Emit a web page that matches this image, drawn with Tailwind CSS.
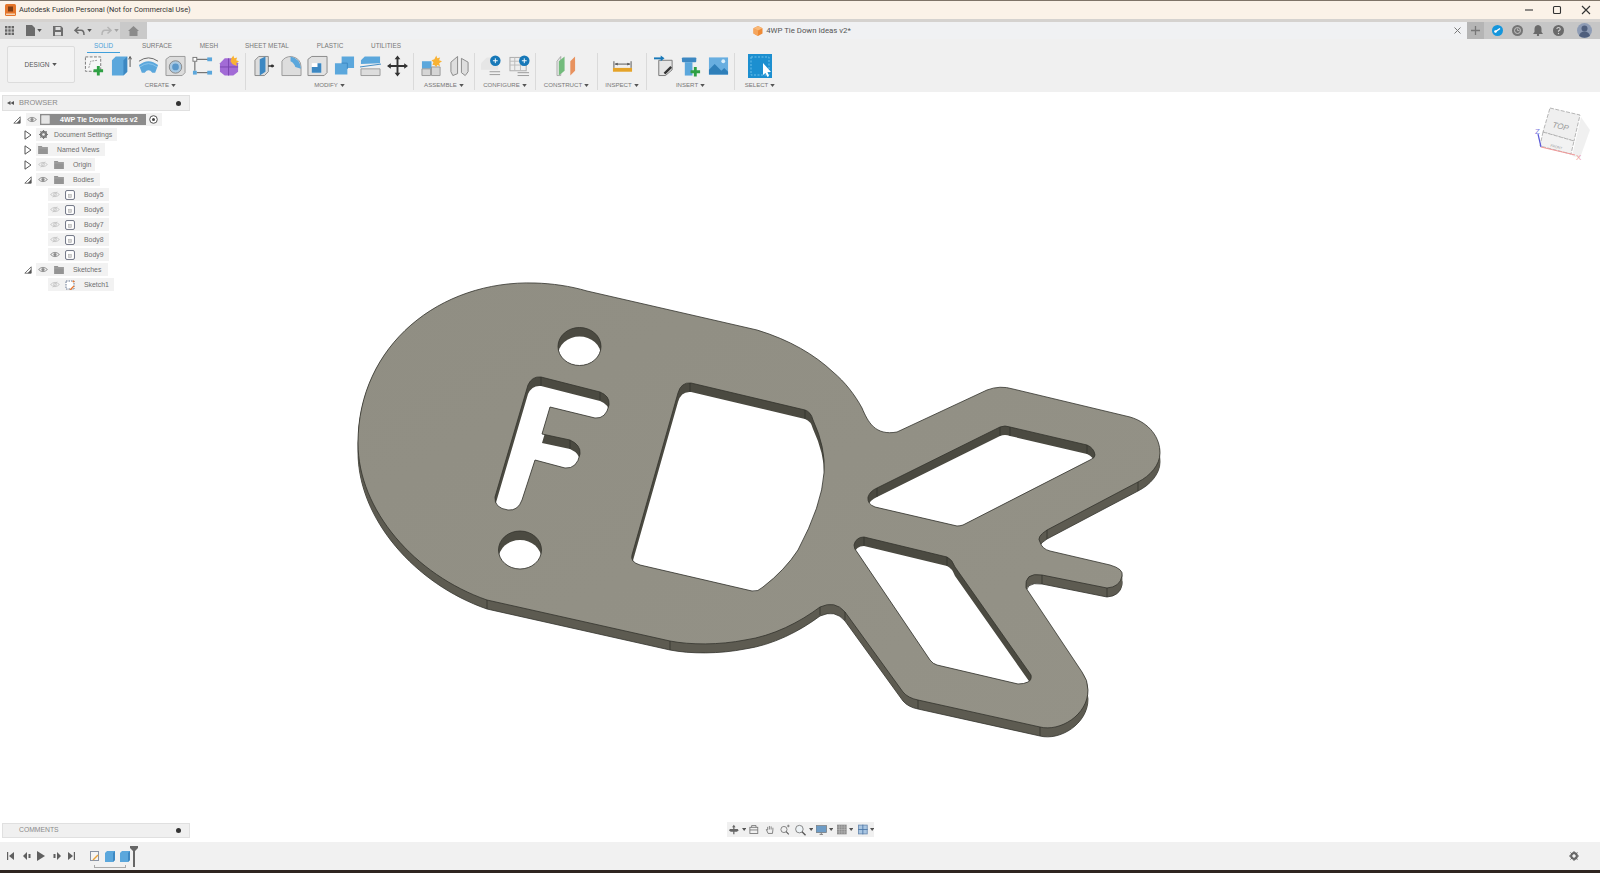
<!DOCTYPE html>
<html lang="en">
<head>
    <meta charset="UTF-8">
    <title>Autodesk Fusion Personal</title>
    <script src="https://cdn.jsdelivr.net/npm/@tailwindcss/browser@4"></script>
</head>
<body class="bg-white">
<!-- shared icon symbols -->
<svg class="hidden" width="0" height="0">
    <symbol id="caret" viewBox="0 0 6 4"><path d="M0 0H6L3 4Z" fill="#555"/></symbol>
    <symbol id="eye" viewBox="0 0 12 8"><path d="M.7 4Q6-1.2 11.3 4 6 9.2.7 4Z" fill="none" stroke="#8a8a8a" stroke-width="1.1"/><circle cx="6" cy="4" r="1.9" fill="#8a8a8a"/></symbol>
    <symbol id="eyeoff" viewBox="0 0 12 8"><path d="M.7 4Q6-1.2 11.3 4 6 9.2.7 4Z" fill="none" stroke="#c4c4c4" stroke-width="1"/><circle cx="6" cy="4" r="1.8" fill="none" stroke="#c4c4c4"/><path d="M8.5.6 3.5 7.4" stroke="#c4c4c4"/></symbol>
    <symbol id="folder" viewBox="0 0 11 9"><path d="M0 0H4L5 1.2H11V9H0Z" fill="#949494"/><path d="M0 2.2H11" stroke="#bdbdbd" stroke-width=".5"/></symbol>
    <symbol id="body" viewBox="0 0 11 11"><rect x=".6" y=".6" width="9.8" height="9.8" rx="1.6" fill="#fff" stroke="#63697a"/><rect x="3.6" y="4.6" width="3.6" height="3.8" fill="#d5d5d5" stroke="#a8a8a8" stroke-width=".5"/></symbol>
    <symbol id="open" viewBox="0 0 8 10"><path d="M1 .8 7 5 1 9.2Z" fill="#fff" stroke="#555" stroke-width="1"/></symbol>
    <symbol id="down" viewBox="0 0 10 10"><path d="M9 1V9H1Z" fill="#fff" stroke="#555" stroke-width="1"/><path d="M9 4V9H4.5Z" fill="#555"/></symbol>
</svg>

<div class="flex h-[873px] w-[1600px] flex-col overflow-hidden bg-white font-['Liberation_Sans',Arial,sans-serif] text-[#6b6b6b]">

    <!-- title bar -->
    <div class="flex h-[19px] shrink-0 items-center border-t border-[#7f7468] bg-[#fbf2e8] pl-[5px]">
        <svg class="h-[12px] w-[11px]" viewBox="0 0 11 12"><rect width="11" height="12" rx="1.5" fill="#e4752a"/><path d="M3 9V2.5H8V7.5H3" fill="#7c3d14"/><rect x="1" y="9.5" width="9" height="1.5" fill="#f8d3b0"/></svg>
        <span class="ml-[3px] font-['Roboto',sans-serif] text-[7.4px] text-[#333]">Autodesk Fusion Personal (Not for Commercial Use)</span>
        <div class="ml-auto flex items-center">
            <svg class="h-[10px] w-[10px]" viewBox="0 0 10 10"><path d="M1 5H9" stroke="#333" stroke-width="1.1"/></svg>
            <svg class="ml-[18px] h-[10px] w-[10px]" viewBox="0 0 10 10"><rect x="1.5" y="1.5" width="7" height="7" rx="1" fill="none" stroke="#333" stroke-width="1.1"/></svg>
            <svg class="ml-[19px] mr-[9px] h-[10px] w-[10px]" viewBox="0 0 10 10"><path d="M1 1 9 9M9 1 1 9" stroke="#333" stroke-width="1.1"/></svg>
        </div>
    </div>
    <div class="h-[3px] shrink-0 bg-[#d5d2cf]"></div>

    <!-- quick access / document tab row -->
    <div class="flex h-[17px] shrink-0 items-stretch bg-[#d9d9d9]">
        <div class="flex w-[120px] shrink-0 items-center">
            <svg class="ml-[5px] h-[9px] w-[9px]" viewBox="0 0 9 9" fill="#666"><rect width="2.4" height="2.4"/><rect x="3.3" width="2.4" height="2.4"/><rect x="6.6" width="2.4" height="2.4"/><rect y="3.3" width="2.4" height="2.4"/><rect x="3.3" y="3.3" width="2.4" height="2.4"/><rect x="6.6" y="3.3" width="2.4" height="2.4"/><rect y="6.6" width="2.4" height="2.4"/><rect x="3.3" y="6.6" width="2.4" height="2.4"/><rect x="6.6" y="6.6" width="2.4" height="2.4"/></svg>
            <svg class="ml-[12px] h-[11px] w-[9px]" viewBox="0 0 9 11"><path d="M0 0H6L9 3V11H0Z" fill="#6b6b6b"/></svg>
            <svg class="ml-[2px] h-[3px] w-[5px]"><use href="#caret"/></svg>
            <svg class="ml-[11px] h-[10px] w-[10px]" viewBox="0 0 10 10"><path d="M0 0H8L10 2V10H0Z" fill="#6e6e6e"/><rect x="2.5" y="1" width="5" height="3" fill="#ddd"/><rect x="2" y="6" width="6" height="3.5" fill="#ddd"/></svg>
            <svg class="ml-[11px] h-[10px] w-[11px]" viewBox="0 0 11 10"><path d="M4.5 1 1 4.3 4.5 7.5M1.5 4.3H7Q10 4.3 10 9" fill="none" stroke="#6b6b6b" stroke-width="1.5"/></svg>
            <svg class="ml-[2px] h-[3px] w-[5px]"><use href="#caret"/></svg>
            <svg class="ml-[9px] h-[10px] w-[11px]" viewBox="0 0 11 10"><path d="M6.5 1 10 4.3 6.5 7.5M9.5 4.3H4Q1 4.3 1 9" fill="none" stroke="#b5b5b5" stroke-width="1.5"/></svg>
            <svg class="ml-[2px] h-[3px] w-[5px] opacity-40"><use href="#caret"/></svg>
        </div>
        <div class="flex w-[27px] shrink-0 items-center justify-center bg-[#c9c9c9]">
            <svg class="h-[10px] w-[11px]" viewBox="0 0 11 10"><path d="M5.5 0 11 5H9.5V10H1.5V5H0Z" fill="#8a8a8a"/></svg>
        </div>
        <div class="flex flex-1 items-center justify-center bg-[#f0f1f3] pl-[10px]">
            <svg class="h-[10px] w-[10px]" viewBox="0 0 10 10"><path d="M5 0 9.5 2.3V7.5L5 10 .5 7.5V2.3Z" fill="#ee8a35"/><path d="M5 4.6V10L.5 7.5V2.3Z" fill="#f5a55c"/><path d="M5 0 9.5 2.3 5 4.6 .5 2.3Z" fill="#f8b878"/></svg>
            <span class="ml-[3px] font-['Roboto',sans-serif] text-[7.8px] text-[#555]">4WP Tie Down Ideas v2*</span>
        </div>
        <div class="flex w-[20px] shrink-0 items-center justify-center bg-[#f0f1f3]">
            <svg class="h-[7px] w-[7px]" viewBox="0 0 7 7"><path d="M.5.5 6.5 6.5M6.5.5.5 6.5" stroke="#777"/></svg>
        </div>
        <div class="flex w-[17px] shrink-0 items-center justify-center bg-[#b5b5b5]">
            <svg class="h-[9px] w-[9px]" viewBox="0 0 9 9"><path d="M4.5 0V9M0 4.5H9" stroke="#777" stroke-width="1.3"/></svg>
        </div>
        <div class="flex w-[116px] shrink-0 items-center bg-[#c6c6c6] pl-[8px]">
            <svg class="h-[11px] w-[11px]" viewBox="0 0 11 11"><circle cx="5.5" cy="5.5" r="5.5" fill="#1596dc"/><path d="M3 7 8 3.5" stroke="#fff" stroke-width="1.5"/><circle cx="3.5" cy="6.5" r="1.3" fill="#fff"/></svg>
            <svg class="ml-[9px] h-[11px] w-[11px]" viewBox="0 0 11 11"><circle cx="5.5" cy="5.5" r="5.5" fill="#747474"/><circle cx="5.5" cy="5.5" r="3" fill="none" stroke="#c6c6c6"/><path d="M5.5 3.5V5.5H7.5" stroke="#c6c6c6" fill="none" stroke-width=".8"/></svg>
            <svg class="ml-[10px] h-[11px] w-[10px]" viewBox="0 0 10 11"><path d="M5 0Q8.5.5 8.5 4V7L10 9H0L1.5 7V4Q1.5.5 5 0Z" fill="#6a6a6a"/><circle cx="5" cy="10" r="1.2" fill="#6a6a6a"/></svg>
            <svg class="ml-[10px] h-[11px] w-[11px]" viewBox="0 0 11 11"><circle cx="5.5" cy="5.5" r="5.5" fill="#6a6a6a"/><path d="M3.8 4Q4 2.5 5.5 2.5T7.3 4Q7.3 5 5.5 6V6.8" fill="none" stroke="#d5d5d5" stroke-width="1.1"/><circle cx="5.5" cy="8.5" r=".7" fill="#d5d5d5"/></svg>
            <svg class="ml-[13px] h-[15px] w-[15px]" viewBox="0 0 15 15"><circle cx="7.5" cy="7.5" r="7.5" fill="#8e9cb5"/><circle cx="7.5" cy="5.5" r="3" fill="#4f5f7d"/><path d="M2 13Q3 8.5 7.5 8.5T13 13Q7.5 16.5 2 13Z" fill="#4f5f7d"/></svg>
        </div>
    </div>

    <!-- ribbon -->
    <div class="flex h-[53px] shrink-0 bg-[#f0f0f0]">
        <div class="w-[84px] shrink-0 pl-[7px] pt-[7px]">
            <div class="flex h-[37px] w-[68px] items-center justify-center gap-[3px] rounded-[2px] border border-[#dcdcdc] bg-[#f3f3f3] text-[6.5px] text-[#555]">
                DESIGN <svg class="h-[3px] w-[5px]"><use href="#caret"/></svg>
            </div>
        </div>
        <div class="flex flex-col">
            <div class="flex h-[14px] items-center pl-[3px] text-center text-[6.4px] text-[#777]">
                <div class="flex h-[14px] w-[33px] items-center justify-center border-b-[1.5px] border-[#3f9fdb] text-[#4a9fd8]">SOLID</div>
                <div class="w-[74px]">SURFACE</div>
                <div class="w-[30px]">MESH</div>
                <div class="w-[86px]">SHEET METAL</div>
                <div class="w-[40px]">PLASTIC</div>
                <div class="w-[72px]">UTILITIES</div>
            </div>
            <div class="flex text-[6.1px] text-[#777]">

                <!-- create -->
                <div class="flex h-[37px] w-[162px] flex-col border-r border-[#dadada] pt-[2px]">
                    <div class="flex h-[22px] gap-[6px]">
                        <svg class="h-[22px] w-[21px]" viewBox="0 0 22 22"><rect x="1.5" y="1.5" width="16" height="15" fill="#f7f7f7" stroke="#777" stroke-dasharray="3 1.5"/><path d="M5 13 7 6 14 5" fill="none" stroke="#999" stroke-dasharray="2 1"/><path d="M15 11V21M10 16H20" stroke="#2ea043" stroke-width="3"/></svg>
                        <svg class="h-[22px] w-[21px]" viewBox="0 0 22 22"><path d="M1 5 5 1H17V17L13 21H1Z" fill="#5ba7dc"/><path d="M13 5V21L17 17V1Z" fill="#3d88c2"/><path d="M20 12V2M18.5 4 20 1 21.5 4" stroke="#555" fill="none"/></svg>
                        <svg class="h-[22px] w-[21px]" viewBox="0 0 22 22"><path d="M1 10Q11 2 21 10L18 18H15Q11 13 7 18H4Z" fill="#5ba7dc"/><path d="M1 6Q11-1 21 6" fill="none" stroke="#666"/><path d="M2 12Q11 5 20 12" fill="none" stroke="#8cc4ea"/></svg>
                        <svg class="h-[22px] w-[21px]" viewBox="0 0 22 22"><path d="M1 4 5 1H21V18L18 21H1Z" fill="#dcdcdc" stroke="#999"/><circle cx="11" cy="12" r="6.5" fill="#a9c9e2" stroke="#888"/><circle cx="11" cy="12" r="3.5" fill="#5a97c9"/></svg>
                        <svg class="h-[22px] w-[21px]" viewBox="0 0 22 22"><path d="M5 4H17M3 6V16M5 18H17" stroke="#555" fill="none"/><rect x="1" y="2" width="4" height="4" fill="#fff" stroke="#777"/><rect x="16" y="2" width="5" height="4" fill="#5ba7dc"/><rect x="1" y="16" width="4" height="4" fill="#5ba7dc"/><rect x="16" y="16" width="5" height="4" fill="#5ba7dc"/></svg>
                        <svg class="h-[22px] w-[21px]" viewBox="0 0 22 22"><path d="M6 3H15L20 8V17L15 21H6L1 17V8Z" fill="#a26bd6"/><path d="M10 3V21M1 12H20" stroke="#7b45b0"/><path d="M15 0 16 3 19 2 18 5 21 6 18 8 19 11 16 10 14 9 12 6 13 3Z" fill="#f9b233"/></svg>
                    </div>
                    <div class="mt-[3px] flex h-[10px] items-center justify-center gap-[2px] pr-[8px]">CREATE <svg class="h-[3px] w-[5px]"><use href="#caret"/></svg></div>
                </div>

                <!-- modify -->
                <div class="flex h-[37px] w-[168px] flex-col border-r border-[#dadada] pl-[8px] pt-[2px]">
                    <div class="flex h-[22px] gap-[5.5px]">
                        <svg class="h-[22px] w-[21px]" viewBox="0 0 22 22"><path d="M1 5 5 1H15V17L11 21H1Z" fill="#ddd" stroke="#888"/><path d="M6 4 12 1V17L6 21Z" fill="#3d88c2"/><path d="M15 11H21" stroke="#333" stroke-width="1.5"/><circle cx="19" cy="11" r="1.5" fill="#333"/></svg>
                        <svg class="h-[22px] w-[21px]" viewBox="0 0 22 22"><path d="M1 6Q4 1 11 1 21 3 21 12V21H1Z" fill="#ddd" stroke="#999"/><path d="M10 1Q20 3 21 14L15 12Q14 8 10 6Z" fill="#5ba7dc"/></svg>
                        <svg class="h-[22px] w-[21px]" viewBox="0 0 22 22"><path d="M1 4 5 1H21V18L18 21H1Z" fill="#e2e2e2" stroke="#888"/><path d="M5 8H15V18H5Z" fill="#fff"/><path d="M5 12H11V8H15V18H5Z" fill="#3d88c2"/></svg>
                        <svg class="h-[22px] w-[21px]" viewBox="0 0 22 22"><path d="M8 1H21V13H14V20H1V8H8Z" fill="#5ba7dc"/><path d="M8 8H14V14" fill="none" stroke="#3d88c2"/></svg>
                        <svg class="h-[22px] w-[21px]" viewBox="0 0 22 22"><path d="M1 5 5 1H21V8L1 9Z" fill="#5ba7dc"/><path d="M1 14H21V21H1Z" fill="#ddd" stroke="#999"/><path d="M0 12 22 9" stroke="#3d88c2"/></svg>
                        <svg class="h-[22px] w-[21px]" viewBox="0 0 22 22"><path d="M11 2V20M2 11H20" stroke="#333" stroke-width="2"/><path d="M11 0 14 4H8ZM11 22 8 18H14ZM0 11 4 8V14ZM22 11 18 14V8Z" fill="#333"/></svg>
                    </div>
                    <div class="mt-[3px] flex h-[10px] items-center justify-center gap-[2px] pr-[8px]">MODIFY <svg class="h-[3px] w-[5px]"><use href="#caret"/></svg></div>
                </div>

                <!-- assemble -->
                <div class="flex h-[37px] w-[61px] flex-col border-r border-[#dadada] pl-[7px] pt-[2px]">
                    <div class="flex h-[22px] gap-[7px]">
                        <svg class="h-[22px] w-[21px]" viewBox="0 0 22 22"><path d="M1 6H11V14H1Z" fill="#5ba7dc"/><path d="M1 14H10V21H1ZM11 12H20V21H11Z" fill="#d5d5d5" stroke="#999"/><path d="M16 0 17 3 20 2 19 5 22 6 19 8 20 11 17 10 16 12 14 10 12 10 13 7 11 5 14 4Z" fill="#f9b233"/></svg>
                        <svg class="h-[22px] w-[21px]" viewBox="0 0 22 22"><path d="M2 7 9 1V19L4 21 2 17ZM20 7 13 3V18L17 21 20 17Z" fill="#dedede" stroke="#888"/></svg>
                    </div>
                    <div class="mt-[3px] flex h-[10px] items-center justify-center gap-[2px] pr-[7px]">ASSEMBLE <svg class="h-[3px] w-[5px]"><use href="#caret"/></svg></div>
                </div>

                <!-- configure -->
                <div class="flex h-[37px] w-[61px] flex-col border-r border-[#dadada] pl-[6px] pt-[2px]">
                    <div class="flex h-[22px] gap-[7px]">
                        <svg class="h-[22px] w-[21px]" viewBox="0 0 22 22"><path d="M0 8 6 2H18V15H0Z" fill="#e6e6e6"/><path d="M9 17H20M9 20H20" stroke="#999"/><circle cx="15" cy="5.5" r="5.5" fill="#1778b8"/><path d="M12.5 5.5H17.5M15 3V8" stroke="#fff"/></svg>
                        <svg class="h-[22px] w-[21px]" viewBox="0 0 22 22"><rect x="1" y="2" width="17" height="14" fill="#eee" stroke="#aaa"/><path d="M1 6H18M1 10H18M6 2V16M12 2V16" stroke="#bbb"/><path d="M9 18H21M9 21H21" stroke="#999"/><circle cx="16" cy="5.5" r="5.5" fill="#1778b8"/><path d="M13.5 5.5H18.5M16 3V8" stroke="#fff"/></svg>
                    </div>
                    <div class="mt-[3px] flex h-[10px] items-center justify-center gap-[2px] pr-[6px]">CONFIGURE <svg class="h-[3px] w-[5px]"><use href="#caret"/></svg></div>
                </div>

                <!-- construct -->
                <div class="flex h-[37px] w-[62px] flex-col border-r border-[#dadada] pt-[2px]">
                    <div class="flex h-[22px] justify-center">
                        <svg class="h-[22px] w-[21px]" viewBox="0 0 22 22"><path d="M1 6 5 1V21L1 21Z" fill="#e5e5e5" stroke="#888" stroke-width=".6"/><path d="M3 6 9 1V16L3 21Z" fill="#73bb7c"/><path d="M15 6 20 1V16L15 21Z" fill="#e8925e"/></svg>
                    </div>
                    <div class="mt-[3px] flex h-[10px] items-center justify-center gap-[2px]">CONSTRUCT <svg class="h-[3px] w-[5px]"><use href="#caret"/></svg></div>
                </div>

                <!-- inspect -->
                <div class="flex h-[37px] w-[49px] flex-col border-r border-[#dadada] pt-[2px]">
                    <div class="flex h-[22px] justify-center">
                        <svg class="h-[22px] w-[21px]" viewBox="0 0 22 22"><path d="M2 6V13M20 6V13M3 9H19" stroke="#555" fill="none"/><path d="M3 9 6 7.5V10.5ZM19 9 16 7.5V10.5Z" fill="#555"/><rect x="1" y="13" width="20" height="4" fill="#e5a329"/></svg>
                    </div>
                    <div class="mt-[3px] flex h-[10px] items-center justify-center gap-[2px]">INSPECT <svg class="h-[3px] w-[5px]"><use href="#caret"/></svg></div>
                </div>

                <!-- insert -->
                <div class="flex h-[37px] w-[88px] flex-col border-r border-[#dadada] pl-[7px] pt-[2px]">
                    <div class="flex h-[22px] gap-[6px]">
                        <svg class="h-[22px] w-[21px]" viewBox="0 0 22 22"><path d="M5 5H19V15L12 21H5Z" fill="#e5e5e5" stroke="#777"/><path d="M0 3H8" stroke="#1778b8" stroke-width="2"/><path d="M7 0 11 3 7 6Z" fill="#1778b8"/><path d="M11 19 18 12" stroke="#333" stroke-width="2.5"/></svg>
                        <svg class="h-[22px] w-[21px]" viewBox="0 0 22 22"><rect x="1" y="2" width="15" height="5" rx="1" fill="#3d88c2"/><rect x="4" y="7" width="8" height="14" fill="#5ba7dc"/><path d="M15 12V22M10 17H20" stroke="#2ea043" stroke-width="3"/></svg>
                        <svg class="h-[22px] w-[21px]" viewBox="0 0 22 22"><rect x="1" y="2" width="20" height="18" fill="#68aee0"/><path d="M1 20V15L7 9 14 16 17 13 21 17V20Z" fill="#2f7fb9"/><circle cx="16" cy="6" r="2" fill="#d9eefb"/></svg>
                    </div>
                    <div class="mt-[3px] flex h-[10px] items-center justify-center gap-[2px] pr-[7px]">INSERT <svg class="h-[3px] w-[5px]"><use href="#caret"/></svg></div>
                </div>

                <!-- select -->
                <div class="flex h-[37px] w-[50px] flex-col pt-[1px]">
                    <div class="flex h-[23px] justify-center">
                        <svg class="h-[24px] w-[24px]" viewBox="0 0 24 24"><rect width="24" height="24" fill="#1c8fd0"/><rect x="3" y="3" width="18" height="18" fill="none" stroke="#6cc0ea" stroke-dasharray="2 1.5"/><path d="M15 9V21L17.5 19 19.5 23 21 22 19.5 18H23Z" fill="#fff"/></svg>
                    </div>
                    <div class="mt-[3px] flex h-[10px] items-center justify-center gap-[2px]">SELECT <svg class="h-[3px] w-[5px]"><use href="#caret"/></svg></div>
                </div>
            </div>
        </div>
    </div>

    <!-- model canvas -->
    <div class="relative flex-1 bg-white">
        <svg class="absolute left-0 top-0" width="1600" height="778" viewBox="0 92 1600 778">
            <defs>
                <linearGradient id="face" x1="0" y1="0" x2="1" y2="1"><stop offset="0" stop-color="#908e83"/><stop offset="1" stop-color="#949287"/></linearGradient>
                <path id="outer" d="M358 443C358 345 440 280 535 283 552 283.5 570 286 587 291L757 330C790 340 815 355 833 372 845 382 855 395 862 408 868 422 875 436 897 432L987 390Q1000 385 1013 389L1130 417C1150 423 1160 438 1160 453 1160 465 1150 476 1138 482L1047 530Q1036 537 1040 542 1042 549 1050 551L1110 565Q1124 569 1122 576 1120 587 1107 588L1042 575Q1024 572 1026 588L1082 672Q1088 680 1088 690C1088 715 1060 732 1040 727L918 700Q908 698 903 692L845 612Q835 600 820 607C800 622 773 636 745 640 720 645 690 645 670 641L487 600C415 575 358 510 358 443Z"/>
                <g id="holes">
                    <ellipse cx="579.5" cy="346.5" rx="21.5" ry="19"/>
                    <ellipse cx="520" cy="550" rx="21.5" ry="19"/>
                    <path d="M528 385Q532 376 541 377L600 392Q610 396 609 405 606 419 595 418L550 407 542 434 570 440Q581 445 580 454 577 469 565 468L535 460 522 500Q518 511 508 510 494 508 495 497Z"/>
                    <path d="M678 393Q681 382 691 383L805 410Q811 412 813 420 826 448 824 473 822 505 798 550 785 570 763 587 758 592 752 591L640 565Q630 562 632 555Z"/>
                    <path d="M868 497Q870 491 877 488L1000 427Q1005 425 1010 427L1087 445Q1094 448 1095 455 1095 458 1090 460L963 525Q960 526 957 526L875 507Q867 504 868 497Z"/>
                    <path d="M854 545Q856 537 864 537L947 557Q952 559 955 567L1031 675Q1032 680 1028 682 1024 684 1018 684L937 665Q933 664 930 660L857 552Q854 549 854 545Z"/>
                </g>
                <clipPath id="holeclip">
                    <ellipse cx="579.5" cy="346.5" rx="21.5" ry="19"/>
                    <ellipse cx="520" cy="550" rx="21.5" ry="19"/>
                    <path d="M528 385Q532 376 541 377L600 392Q610 396 609 405 606 419 595 418L550 407 542 434 570 440Q581 445 580 454 577 469 565 468L535 460 522 500Q518 511 508 510 494 508 495 497Z"/>
                    <path d="M678 393Q681 382 691 383L805 410Q811 412 813 420 826 448 824 473 822 505 798 550 785 570 763 587 758 592 752 591L640 565Q630 562 632 555Z"/>
                    <path d="M868 497Q870 491 877 488L1000 427Q1005 425 1010 427L1087 445Q1094 448 1095 455 1095 458 1090 460L963 525Q960 526 957 526L875 507Q867 504 868 497Z"/>
                    <path d="M854 545Q856 537 864 537L947 557Q952 559 955 567L1031 675Q1032 680 1028 682 1024 684 1018 684L937 665Q933 664 930 660L857 552Q854 549 854 545Z"/>
                </clipPath>
            </defs>
            <!-- extruded side -->
            <g fill="#5d5b51" stroke="#34332d" stroke-width=".8">
                <use href="#outer" y="9"/>
            </g>
            <g fill="#5d5b51">
                <use href="#outer" y="1"/><use href="#outer" y="2"/><use href="#outer" y="3"/><use href="#outer" y="4"/><use href="#outer" y="5"/><use href="#outer" y="6"/><use href="#outer" y="7"/><use href="#outer" y="8"/>
            </g>
            <!-- top face -->
            <use href="#outer" fill="url(#face)" stroke="#34332d" stroke-width=".8"/>
            <!-- hole walls, then what is seen through them -->
            <use href="#holes" fill="#4b4a41"/>
            <g clip-path="url(#holeclip)"><use href="#holes" y="9" fill="#fff"/></g>
            <use href="#holes" fill="none" stroke="#34332d" stroke-width=".8"/>
            <!-- tangent edges on the side faces -->
            <path d="M487 600V609M670 641V650M1138 482V491M1040 727V736M918 700V709M1107 588V597M1042 575V584M1047 530V539M690 383V392M805 410V419M1000 427V436M1010 427V436M1087 445V454M877 488V497M864 537V546M947 557V566M541 377V386M600 392V400M570 440V449M820 607V615M845 612V620" stroke="#2f2e29" stroke-width=".7"/>

            <!-- view cube -->
            <path d="M1581 117 1590 130 1580 158 1572 156Z" fill="#000" opacity=".06"/>
            <path d="M1550 108 1580 115 1574 141 1543 132Z" fill="#efefef" stroke="#a5a5a5" stroke-width=".8" stroke-dasharray="4 1.5"/>
            <path d="M1543 132 1574 141 1571 154 1540 146Z" fill="#f2f2f2" stroke="#a5a5a5" stroke-width=".8" stroke-dasharray="4 1.5"/>
            <text x="1560" y="129" transform="rotate(13 1560 129)" text-anchor="middle" font-size="8" font-style="italic" fill="#9a9a9a" font-family="Liberation Sans">TOP</text>
            <text x="1556" y="148" transform="rotate(15 1556 148)" text-anchor="middle" font-size="3.5" fill="#999" font-family="Liberation Sans">FRONT</text>
            <path d="M1541 147 1575 155" stroke="#f09a9a" stroke-width="1.2"/>
            <path d="M1541 147 1538 134" stroke="#5a5ad8" stroke-width="1.2"/>
            <text x="1576" y="160" font-size="8" fill="#f09a9a" font-family="Liberation Sans">X</text>
            <text x="1535" y="134" font-size="8" fill="#8080e0" font-family="Liberation Sans">Z</text>
        </svg>

        <!-- browser panel -->
        <div class="absolute left-[2px] top-[3px] w-[188px]">
            <div class="flex h-[16px] items-center border border-[#e0e0e0] bg-[#f0f0f0] text-[7.5px] text-[#8a8a8a]">
                <svg class="ml-[4px] h-[4px] w-[7px]" viewBox="0 0 7 4"><path d="M3.5 0V4L0 2ZM7 0V4L3.5 2Z" fill="#555"/></svg>
                <span class="ml-[5px]">BROWSER</span>
                <span class="ml-auto mr-[8px] h-[5px] w-[5px] rounded-full bg-[#333]"></span>
            </div>
        </div>
        <div class="absolute left-0 top-[20px] flex w-[190px] flex-col whitespace-nowrap text-[6.9px] text-[#6e6e6e] [&_span]:pt-[1px]">
            <div class="flex h-[15px] items-center pl-[13px]">
                <svg class="h-[8px] w-[8px]"><use href="#down"/></svg>
                <div class="ml-[5px] flex h-[13px] w-[136px] items-center bg-[#f2f2f2]">
                    <svg class="ml-[1px] h-[7px] w-[10px] shrink-0"><use href="#eye"/></svg>
                    <div class="ml-[3px] flex h-[11px] w-[106px] shrink-0 items-center bg-[#8c8c8c]">
                        <span class="ml-[1px] h-[9px] w-[9px] shrink-0 rounded-[1px] border border-[#ccc] bg-[#e5e5e5]"></span>
                        <span class="ml-[10px] text-[7px] font-bold text-white">4WP Tie Down Ideas v2</span>
                    </div>
                    <svg class="ml-auto mr-[4px] h-[9px] w-[9px] shrink-0" viewBox="0 0 9 9"><circle cx="4.5" cy="4.5" r="3.8" fill="#fff" stroke="#555"/><circle cx="4.5" cy="4.5" r="1.5" fill="#444"/></svg>
                </div>
            </div>
            <div class="flex h-[15px] items-center pl-[24px]">
                <svg class="h-[10px] w-[8px]"><use href="#open"/></svg>
                <div class="ml-[4px] flex h-[13px] w-[81px] items-center bg-[#f2f2f2]">
                    <svg class="ml-[3px] h-[9px] w-[9px]" viewBox="0 0 9 9"><circle cx="4.5" cy="4.5" r="2.8" fill="none" stroke="#777" stroke-width="1.8"/><path d="M4.5 0V9M0 4.5H9M1.3 1.3 7.7 7.7M7.7 1.3 1.3 7.7" stroke="#777"/><circle cx="4.5" cy="4.5" r="1.3" fill="#f2f2f2"/></svg>
                    <span class="ml-[6px]">Document Settings</span>
                </div>
            </div>
            <div class="flex h-[15px] items-center pl-[24px]">
                <svg class="h-[10px] w-[8px]"><use href="#open"/></svg>
                <div class="ml-[4px] flex h-[13px] w-[69px] items-center bg-[#f2f2f2]">
                    <svg class="ml-[2px] h-[8px] w-[10px]"><use href="#folder"/></svg>
                    <span class="ml-[9px]">Named Views</span>
                </div>
            </div>
            <div class="flex h-[15px] items-center pl-[24px]">
                <svg class="h-[10px] w-[8px]"><use href="#open"/></svg>
                <div class="ml-[4px] flex h-[13px] w-[59px] items-center bg-[#f2f2f2]">
                    <svg class="ml-[2px] h-[7px] w-[10px]"><use href="#eyeoff"/></svg>
                    <svg class="ml-[6px] h-[8px] w-[10px]"><use href="#folder"/></svg>
                    <span class="ml-[9px]">Origin</span>
                </div>
            </div>
            <div class="flex h-[15px] items-center pl-[24px]">
                <svg class="h-[8px] w-[8px]"><use href="#down"/></svg>
                <div class="ml-[4px] flex h-[13px] w-[64px] items-center bg-[#f2f2f2]">
                    <svg class="ml-[2px] h-[7px] w-[10px]"><use href="#eye"/></svg>
                    <svg class="ml-[6px] h-[8px] w-[10px]"><use href="#folder"/></svg>
                    <span class="ml-[9px]">Bodies</span>
                </div>
            </div>
            <div class="ml-[48px] flex h-[15px] w-[61px] items-center">
                <div class="flex h-[13px] w-full items-center bg-[#f2f2f2]">
                    <svg class="ml-[2px] h-[7px] w-[10px]"><use href="#eyeoff"/></svg>
                    <svg class="ml-[5px] h-[10px] w-[10px]"><use href="#body"/></svg>
                    <span class="ml-[9px]">Body5</span>
                </div>
            </div>
            <div class="ml-[48px] flex h-[15px] w-[61px] items-center">
                <div class="flex h-[13px] w-full items-center bg-[#f2f2f2]">
                    <svg class="ml-[2px] h-[7px] w-[10px]"><use href="#eyeoff"/></svg>
                    <svg class="ml-[5px] h-[10px] w-[10px]"><use href="#body"/></svg>
                    <span class="ml-[9px]">Body6</span>
                </div>
            </div>
            <div class="ml-[48px] flex h-[15px] w-[61px] items-center">
                <div class="flex h-[13px] w-full items-center bg-[#f2f2f2]">
                    <svg class="ml-[2px] h-[7px] w-[10px]"><use href="#eyeoff"/></svg>
                    <svg class="ml-[5px] h-[10px] w-[10px]"><use href="#body"/></svg>
                    <span class="ml-[9px]">Body7</span>
                </div>
            </div>
            <div class="ml-[48px] flex h-[15px] w-[61px] items-center">
                <div class="flex h-[13px] w-full items-center bg-[#f2f2f2]">
                    <svg class="ml-[2px] h-[7px] w-[10px]"><use href="#eyeoff"/></svg>
                    <svg class="ml-[5px] h-[10px] w-[10px]"><use href="#body"/></svg>
                    <span class="ml-[9px]">Body8</span>
                </div>
            </div>
            <div class="ml-[48px] flex h-[15px] w-[61px] items-center">
                <div class="flex h-[13px] w-full items-center bg-[#f2f2f2]">
                    <svg class="ml-[2px] h-[7px] w-[10px]"><use href="#eye"/></svg>
                    <svg class="ml-[5px] h-[10px] w-[10px]"><use href="#body"/></svg>
                    <span class="ml-[9px]">Body9</span>
                </div>
            </div>
            <div class="flex h-[15px] items-center pl-[24px]">
                <svg class="h-[8px] w-[8px]"><use href="#down"/></svg>
                <div class="ml-[4px] flex h-[13px] w-[72px] items-center bg-[#f2f2f2]">
                    <svg class="ml-[2px] h-[7px] w-[10px]"><use href="#eye"/></svg>
                    <svg class="ml-[6px] h-[8px] w-[10px]"><use href="#folder"/></svg>
                    <span class="ml-[9px]">Sketches</span>
                </div>
            </div>
            <div class="ml-[48px] flex h-[15px] w-[66px] items-center">
                <div class="flex h-[13px] w-full items-center bg-[#f2f2f2]">
                    <svg class="ml-[2px] h-[7px] w-[10px]"><use href="#eyeoff"/></svg>
                    <svg class="ml-[5px] h-[10px] w-[10px]" viewBox="0 0 10 10"><rect x="1" y="1" width="8" height="8" fill="#fff" stroke="#6a7a94" stroke-dasharray="1.5 1"/><path d="M5 10 9 6" stroke="#e8772e" stroke-width="1.3"/><circle cx="8.5" cy="1.5" r="1" fill="#e8772e"/></svg>
                    <span class="ml-[9px]">Sketch1</span>
                </div>
            </div>
        </div>

        <!-- comments panel -->
        <div class="absolute bottom-[4px] left-[2px] flex h-[15px] w-[188px] items-center border border-[#e0e0e0] bg-[#f0f0f0] text-[6.8px] text-[#8a8a8a]">
            <span class="ml-[16px]">COMMENTS</span>
            <span class="ml-auto mr-[8px] h-[5px] w-[5px] rounded-full bg-[#333]"></span>
        </div>

        <!-- navigation bar -->
        <div class="absolute bottom-[5px] left-[727px] flex h-[15px] w-[147px] items-center bg-[#f0f0f0] pl-[2px]">
            <svg class="h-[11px] w-[11px]" viewBox="0 0 11 11"><path d="M5.5 0 7.5 3H6.2V5H10L11 6.5 9 8H6.2V11H4.8V8H2L0 6.5 1 5H4.8V3H3.5Z" fill="#666"/></svg>
            <svg class="ml-[3px] h-[3px] w-[5px]"><use href="#caret"/></svg>
            <svg class="ml-[3px] h-[11px] w-[11px]" viewBox="0 0 11 11"><rect x="1" y="3" width="9" height="7" fill="none" stroke="#777"/><path d="M3 3V1H8V3M1 6H10" stroke="#777" fill="none"/></svg>
            <svg class="ml-[6px] h-[11px] w-[11px]" viewBox="0 0 11 11"><path d="M3 6V2.5M5 5.5V1.5M7 5.5V2M9 6V3.5M3 6 1.5 5.5 3.5 10H8.5L9 6" fill="none" stroke="#777"/></svg>
            <svg class="ml-[6px] h-[11px] w-[11px]" viewBox="0 0 11 11"><circle cx="4.5" cy="5.5" r="3.5" fill="none" stroke="#777"/><path d="M7 8 10 11" stroke="#555" stroke-width="1.2"/><path d="M9.5 0V3M8 1.5H11" stroke="#777"/></svg>
            <svg class="ml-[5px] h-[12px] w-[12px]" viewBox="0 0 12 12"><circle cx="5" cy="5" r="4.3" fill="#eef3f6" stroke="#777"/><path d="M8 8 12 12" stroke="#555" stroke-width="1.5"/></svg>
            <svg class="ml-[3px] h-[3px] w-[5px]"><use href="#caret"/></svg>
            <svg class="ml-[3px] h-[12px] w-[12px]" viewBox="0 0 12 12"><rect x="0" y="1" width="12" height="8" fill="#6d9cc6" stroke="#777" stroke-width=".8"/><path d="M4 11H8M6 9V11" stroke="#777"/></svg>
            <svg class="ml-[2px] h-[3px] w-[5px]"><use href="#caret"/></svg>
            <svg class="ml-[4px] h-[11px] w-[11px]" viewBox="0 0 11 11"><rect width="11" height="11" fill="#8d8d8d"/><path d="M2.7 0V11M5.5 0V11M8.3 0V11M0 2.7H11M0 5.5H11M0 8.3H11" stroke="#c5c5c5" stroke-width=".5"/></svg>
            <svg class="ml-[2px] h-[3px] w-[5px]"><use href="#caret"/></svg>
            <svg class="ml-[5px] h-[11px] w-[11px]" viewBox="0 0 11 11"><rect x=".5" y=".5" width="10" height="10" fill="#a9c6e2" stroke="#6b8bb0"/><path d="M5.5 0V11M0 5.5H11" stroke="#4d78a8"/></svg>
            <svg class="ml-[2px] h-[3px] w-[5px]"><use href="#caret"/></svg>
        </div>
    </div>

    <!-- timeline -->
    <div class="relative flex h-[28px] shrink-0 items-center bg-[#f1f1f1] pl-[7px]">
        <svg class="h-[8px] w-[7px]" viewBox="0 0 7 8"><path d="M0 0H1.2V8H0ZM7 0V8L2 4Z" fill="#5f5f5f"/></svg>
        <svg class="ml-[9px] h-[8px] w-[8px]" viewBox="0 0 8 8"><path d="M4 0V8L0 4Z M5.5 2H7.5V6H5.5Z" fill="#5f5f5f"/></svg>
        <svg class="ml-[6px] h-[10px] w-[8px]" viewBox="0 0 8 10"><path d="M0 0 8 5 0 10Z" fill="#5f5f5f"/></svg>
        <svg class="ml-[8px] h-[8px] w-[8px]" viewBox="0 0 8 8"><path d="M4 0V8L8 4Z M.5 2H2.5V6H.5Z" fill="#5f5f5f"/></svg>
        <svg class="ml-[7px] h-[8px] w-[7px]" viewBox="0 0 7 8"><path d="M7 0H5.8V8H7ZM0 0V8L5 4Z" fill="#5f5f5f"/></svg>
        <div class="relative ml-[15px] flex items-center gap-[5px]">
            <svg class="h-[11px] w-[10px]" viewBox="0 0 10 11"><rect x=".5" y=".5" width="8" height="9" fill="#f5f5f5" stroke="#8a94a5"/><path d="M3 9 8 4" stroke="#e9a23b" stroke-width="1.5"/></svg>
            <svg class="h-[11px] w-[10px]" viewBox="0 0 10 11"><path d="M0 2 2 0H10V9L8 11H0Z" fill="#5ba7dc"/><path d="M8 2V11L10 9V0Z" fill="#3d88c2"/></svg>
            <svg class="h-[11px] w-[10px]" viewBox="0 0 10 11"><path d="M0 2 2 0H10V9L8 11H0Z" fill="#5ba7dc"/><path d="M8 2V11L10 9V0Z" fill="#3d88c2"/></svg>
            <div class="absolute left-[4px] top-[14px] h-[3px] w-[32px] border-x border-b border-[#aaa]"></div>
        </div>
        <svg class="h-[21px] w-[8px]" viewBox="0 0 8 21"><path d="M0 0H8V2L5 5V21H3V5L0 2Z" fill="#666"/></svg>
        <svg class="ml-auto mr-[21px] h-[10px] w-[10px]" viewBox="0 0 10 10"><circle cx="5" cy="5" r="3" fill="none" stroke="#666" stroke-width="1.8"/><path d="M5 0V10M0 5H10M1.5 1.5 8.5 8.5M8.5 1.5 1.5 8.5" stroke="#666"/><circle cx="5" cy="5" r="1.4" fill="#f1f1f1"/></svg>
    </div>
    <div class="h-[3px] shrink-0 bg-[#2e2520]"></div>
</div>
</body>
</html>
